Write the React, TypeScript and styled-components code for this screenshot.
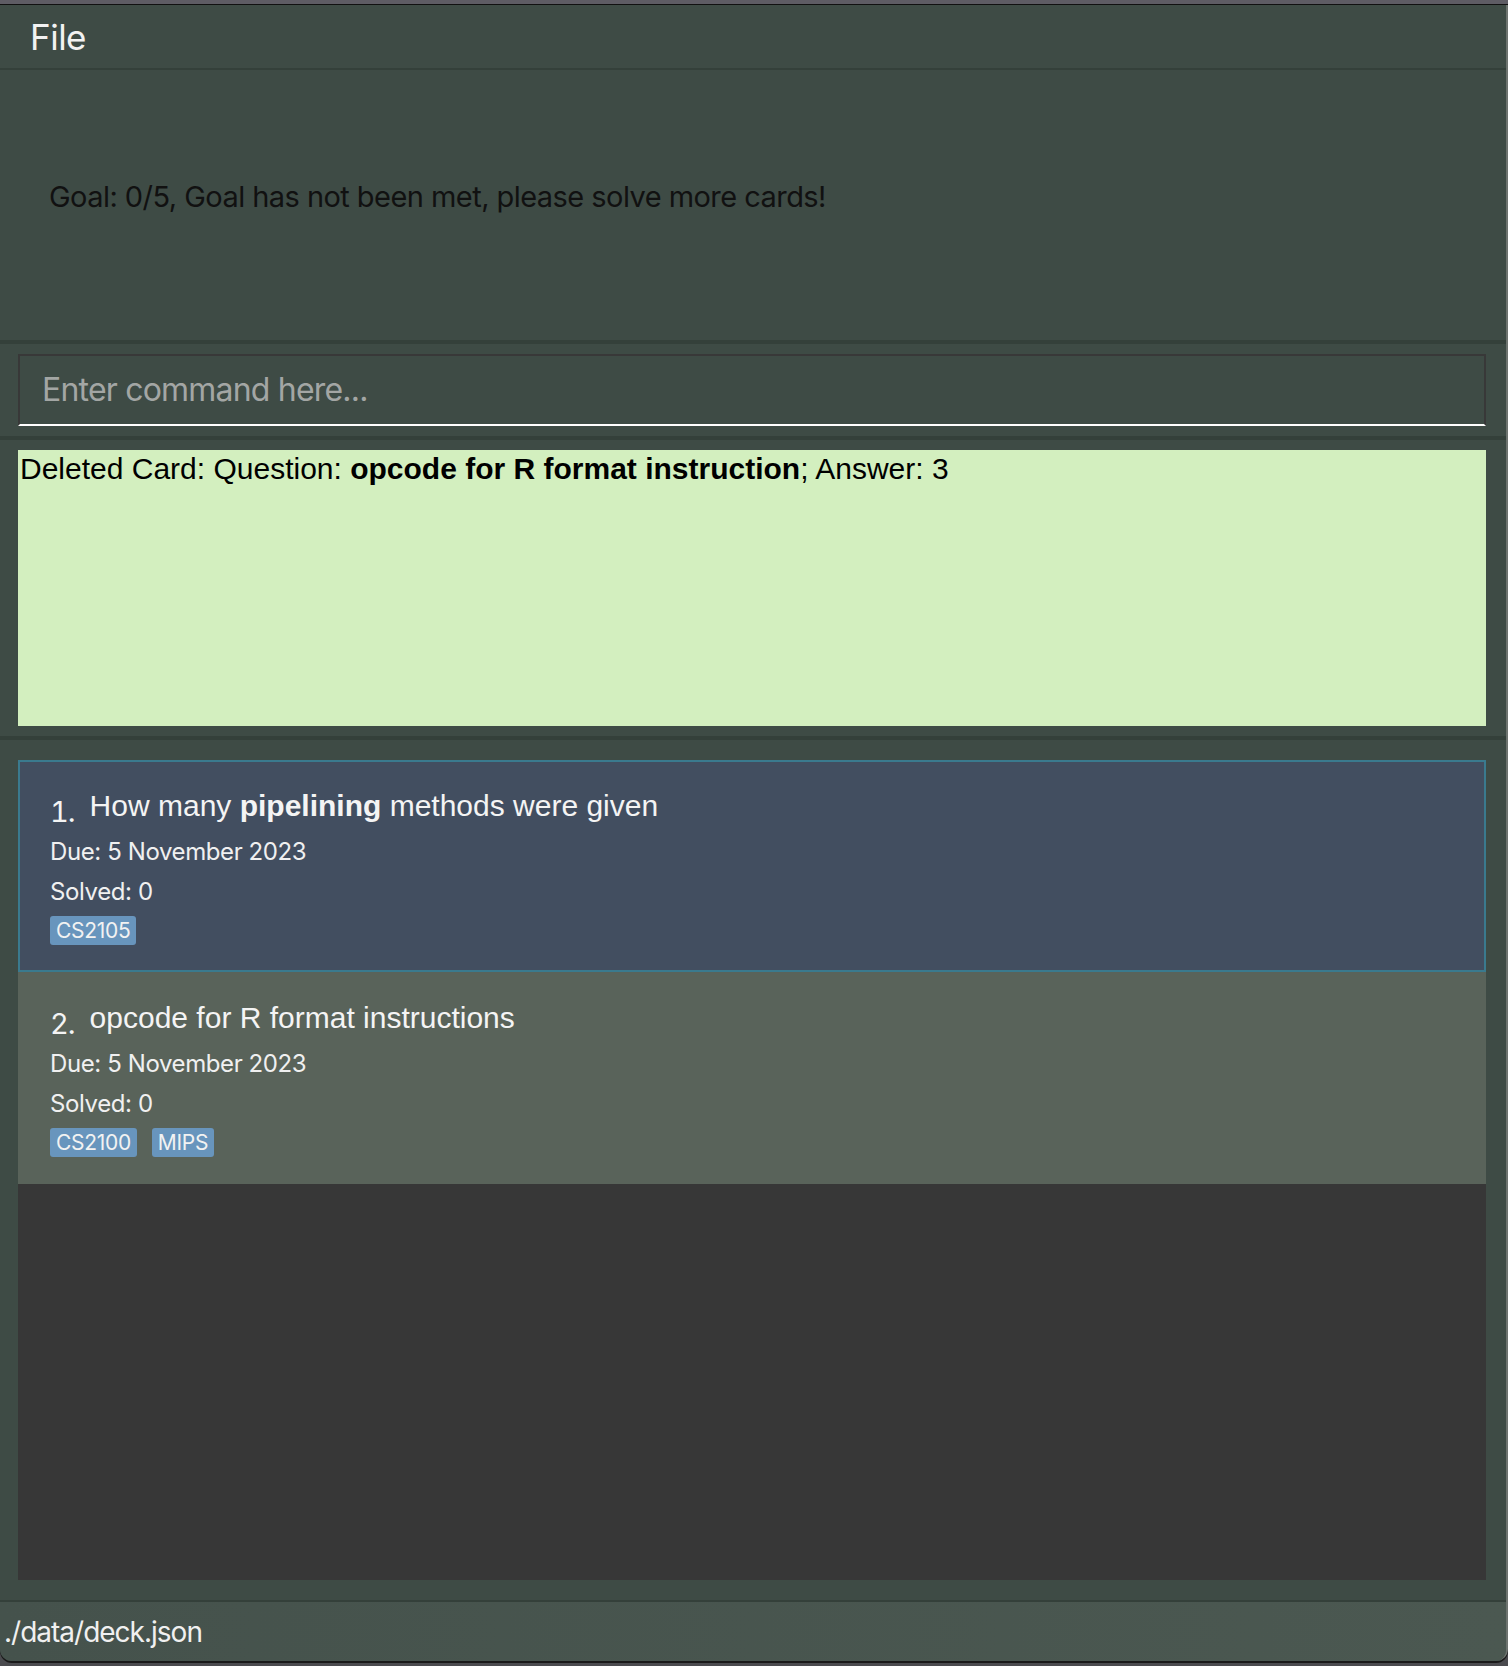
import React from "react";
import styled, { createGlobalStyle } from "styled-components";

const GlobalStyle = createGlobalStyle`
  html, body {
    margin: 0;
    padding: 0;
    background: #4a4a4e;
  }
  * {
    box-sizing: border-box;
  }
`;

const Desktop = styled.div`
  width: 1508px;
  height: 1666px;
  background: #4b4b4f;
  overflow: hidden;
`;

const TitleStrip = styled.div`
  height: 5px;
  background: #5e5c64;
  border-bottom: 1px solid #111;
`;

const Window = styled.div`
  width: 1508px;
  height: 1656px;
  display: flex;
  flex-direction: column;
  background: #3e4b45;
  border-right: 2px solid #6d736f;
  border-radius: 0 0 12px 12px;
  overflow: hidden;
  box-shadow: 0 2px 0 #1a1a1a;
  font-family: Inter, "Liberation Sans", sans-serif;
`;

const MenuBar = styled.div`
  height: 65px;
  display: flex;
  align-items: center;
  padding-left: 30px;
  border-bottom: 2px solid #34403a;
`;

const MenuItem = styled.span`
  font-size: 35px;
  color: #f2f2f2;
  letter-spacing: -0.5px;
`;

const GoalPanel = styled.div`
  height: 270px;
  display: flex;
  align-items: center;
  padding-left: 49px;
  padding-bottom: 18px;
`;

const GoalText = styled.span`
  font-size: 29px;
  color: #111;
  letter-spacing: -0.55px;
`;

const Divider = styled.div`
  height: 4px;
  background: #34403a;
`;

const CommandPanel = styled.div`
  padding: 10px 20px 10px 18px;
`;

const CommandBox = styled.input`
  width: 100%;
  height: 72px;
  background: #3e4b45;
  border: 2px solid #383838;
  border-bottom: 2px solid #ffffff;
  padding: 0 0 2px 22px;
  font-family: Inter, "Liberation Sans", sans-serif;
  font-size: 32px;
  letter-spacing: -0.8px;
  color: #eee;
  outline: none;

  &::placeholder {
    color: #a3a6a4;
  }
`;

const ResultPanel = styled.div`
  padding: 10px 20px 10px 18px;
`;

const ResultBox = styled.div`
  height: 276px;
  background: #d3efbf;
  padding: 1px 2px;
  font-family: "Liberation Sans", Arial, sans-serif;
  font-size: 30px;
  line-height: 36px;
  color: #000;
`;

const ListPanel = styled.div`
  flex: 1;
  padding: 20px 20px 20px 18px;
  display: flex;
  flex-direction: column;
`;

const CardList = styled.div`
  flex: 1;
  background: #373737;
  display: flex;
  flex-direction: column;
`;

const Card = styled.div<{ $selected?: boolean }>`
  height: 212px;
  background: ${(p) => (p.$selected ? "#424e60" : "#59635a")};
  border: 2px solid ${(p) => (p.$selected ? "#3a7a8e" : "#59635a")};
  padding: 26px 30px 0 30px;
  color: #f4f4f4;
`;

const TitleRow = styled.div`
  height: 40px;
  display: flex;
  align-items: baseline;
  gap: 15px;
`;

const Index = styled.span`
  font-family: Inter, sans-serif;
  font-size: 29px;
  font-variant-numeric: tabular-nums;
  letter-spacing: -1px;
  position: relative;
  top: 6px;
`;

const Question = styled.span`
  font-family: "Liberation Sans", Arial, sans-serif;
  font-size: 30px;
`;

const InfoLine = styled.div`
  height: 40px;
  display: flex;
  align-items: center;
  font-size: 24px;
  letter-spacing: -0.4px;
  color: #f0f0f0;
`;

const Due = styled(InfoLine)`
  margin-top: 3px;
`;

const Tags = styled.div`
  display: flex;
  gap: 15px;
  margin-top: 5px;
`;

const Tag = styled.span`
  height: 29px;
  display: flex;
  align-items: center;
  padding: 0 6px;
  background: #6895bd;
  border-radius: 3px;
  font-size: 21px;
  letter-spacing: -0.3px;
  color: #f2f2f2;
`;

const StatusBar = styled.div`
  height: 61px;
  border-top: 2px solid #34403a;
  background: linear-gradient(90deg, #45524c, #4b5851);
  display: flex;
  align-items: center;
  padding-left: 4px;
  font-size: 28px;
  letter-spacing: -1px;
  color: #f0f0f0;
`;

type CardData = {
  question: React.ReactNode;
  due: string;
  solved: number;
  tags: string[];
};

const cards: CardData[] = [
  {
    question: (
      <>
        How many <b>pipelining</b> methods were given
      </>
    ),
    due: "5 November 2023",
    solved: 0,
    tags: ["CS2105"],
  },
  {
    question: "opcode for R format instructions",
    due: "5 November 2023",
    solved: 0,
    tags: ["CS2100", "MIPS"],
  },
];

const App = () => {
  return (
    <Desktop>
      <GlobalStyle />
      <TitleStrip />
      <Window>
        <MenuBar>
          <MenuItem>File</MenuItem>
        </MenuBar>
        <GoalPanel>
          <GoalText>Goal: 0/5, Goal has not been met, please solve more cards!</GoalText>
        </GoalPanel>
        <Divider />
        <CommandPanel>
          <CommandBox placeholder="Enter command here..." />
        </CommandPanel>
        <Divider />
        <ResultPanel>
          <ResultBox>
            Deleted Card: Question: <b>opcode for R format instruction</b>; Answer: 3
          </ResultBox>
        </ResultPanel>
        <Divider />
        <ListPanel>
          <CardList>
            {cards.map((card, i) => (
              <Card key={i} $selected={i === 0}>
                <TitleRow>
                  <Index>{i + 1}.</Index>
                  <Question>{card.question}</Question>
                </TitleRow>
                <Due>Due: {card.due}</Due>
                <InfoLine>Solved: {card.solved}</InfoLine>
                <Tags>
                  {card.tags.map((t) => (
                    <Tag key={t}>{t}</Tag>
                  ))}
                </Tags>
              </Card>
            ))}
          </CardList>
        </ListPanel>
        <StatusBar>./data/deck.json</StatusBar>
      </Window>
    </Desktop>
  );
};

export default App;
